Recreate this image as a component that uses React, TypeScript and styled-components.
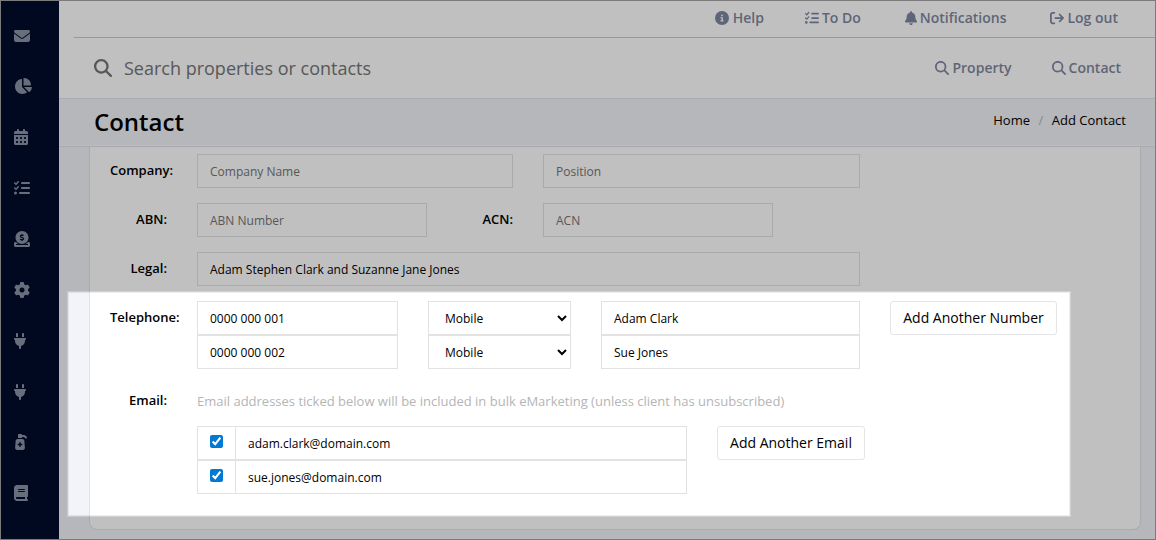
import React from "react";
import styled, { createGlobalStyle } from "styled-components";
import {
  FaArrowRightFromBracket,
  FaBell,
  FaBook,
  FaCalendarDays,
  FaChartPie,
  FaCircleDollarToSlot,
  FaCircleInfo,
  FaEnvelope,
  FaGear,
  FaListCheck,
  FaMagnifyingGlass,
  FaPlug,
  FaPumpMedical,
} from "react-icons/fa6";

const GlobalStyle = createGlobalStyle`
  *, *::before, *::after { box-sizing: border-box; }
  body { margin: 0; }
  body, input, select, button { font-family: "Open Sans", "Noto Sans", sans-serif; }
`;

const Frame = styled.div`
  position: relative;
  display: flex;
  width: 1156px;
  height: 540px;
  overflow: hidden;
  border: 1px solid #7b7b7b;
  background: #f2f4f9;
  color: #000;
  font-size: 13px;
`;

const Sidebar = styled.nav`
  flex: none;
  width: 58px;
  padding: 27px 0 0 13px;
  background: #000d2a;
  color: #8992a5;
`;

const SideLink = styled.a<{ $w: number; $dy?: number }>`
  display: flex;
  align-items: center;
  height: 16px;
  margin-bottom: 34.8px;

  svg {
    flex: none;
    width: ${(p) => p.$w}px;
    height: 16px;
    transform: translateY(${(p) => p.$dy ?? 0}px);
  }
`;

const Main = styled.main`
  flex: 1;
  min-width: 0;
  display: flex;
  flex-direction: column;
`;

const TopBar = styled.header`
  display: flex;
  justify-content: flex-end;
  align-items: center;
  height: 37px;
  margin-left: 15px;
  padding: 0 37px 3px 0;
  border-bottom: 1px solid #ccc;
  background: #fff;
  box-shadow: -15px 0 0 #fff;
`;

const NavLink = styled.a<{ $gap?: number; $space?: number }>`
  display: flex;
  align-items: center;
  gap: ${(p) => p.$space ?? 3}px;
  margin-left: ${(p) => p.$gap ?? 0}px;
  color: #7f87a0;
  font-size: 14px;
  font-weight: 600;
  line-height: 20px;
  white-space: nowrap;

  svg { width: auto; height: 14px; }
`;

const SearchBar = styled.div`
  display: flex;
  align-items: center;
  height: 61px;
  padding: 0 34px 0 35px;
  border-bottom: 1px solid #e2e4e8;
  background: #fff;
`;

const SearchIcon = styled(FaMagnifyingGlass)`
  width: 18px;
  height: 18px;
  color: #757575;
`;

const SearchInput = styled.input`
  flex: 1;
  min-width: 0;
  padding: 0;
  margin-left: 12px;
  border: 0;
  outline: 0;
  background: transparent;
  font-size: 18px;

  &::placeholder { color: #757575; }
`;

const TitleBar = styled.div`
  display: flex;
  justify-content: space-between;
  align-items: center;
  height: 48px;
  padding: 0 29px 2px 35px;
  border-bottom: 1px solid #dfe1e5;
  box-shadow: inset 0 -1px 0 #fafbfd;
`;

const Title = styled.h1`
  margin: 0;
  font-size: 24px;
  font-weight: 600;
  line-height: 32px;
`;

const Crumbs = styled.div`
  display: flex;
  gap: 8.5px;
  padding-bottom: 3px;
  line-height: 18px;
`;

const Slash = styled.span`
  color: #b0b3b9;
`;

const Card = styled.form`
  display: flex;
  flex-direction: column;
  gap: 15px;
  height: 383px;
  margin: 0 14px 0 30px;
  padding: 7px 20px 0;
  border: 1px solid #e1e3e7;
  border-top: 0;
  border-radius: 0 0 8px 8px;
  background: #fff;
`;

const Row = styled.div`
  display: flex;
  align-items: flex-start;
`;

const Label = styled.label<{ $left?: number }>`
  flex: none;
  width: ${(p) => (p.$left ? 86 : 57)}px;
  margin-right: 30px;
  font-weight: 600;
  line-height: 32px;
  text-align: right;
  white-space: nowrap;
`;

const Field = styled.input<{ $w: number }>`
  width: ${(p) => p.$w}px;
  height: 34px;
  padding: 0 12px;
  border: 1px solid #e2e2e2;
  border-radius: 0;
  outline: 0;
  background: #fff;
  color: #000;
  font-size: 12px;

  &::placeholder { color: #757575; opacity: 1; }
`;

const Select = styled.select`
  width: 143px;
  height: 34px;
  padding: 0 0 0 12px;
  border: 1px solid #e2e2e2;
  border-radius: 0;
  background: #fff;
  color: #000;
  font-size: 12px;
`;

const Stack = styled.div`
  display: flex;
  flex-direction: column;
`;

const Cells = styled.div<{ $gap?: number }>`
  display: flex;
  gap: ${(p) => p.$gap ?? 0}px;
`;

const Button = styled.button<{ $w: number }>`
  width: ${(p) => p.$w}px;
  height: 34px;
  margin-left: 30px;
  padding: 0 0 2px;
  border: 1px solid #e4e5e9;
  border-radius: 3px;
  background: #fff;
  color: #000;
  font-size: 14px;
  white-space: nowrap;
`;

const Hint = styled.p`
  margin: 0;
  height: 42px;
  color: #b5b5b5;
  line-height: 34px;
`;

const CheckCell = styled.span`
  display: flex;
  justify-content: center;
  width: 38px;
  height: 34px;
  padding-top: 8px;
  border: 1px solid #e2e2e2;
  border-right: 0;
`;

const Check = styled.input`
  width: 13px;
  height: 13px;
  margin: 0;
  accent-color: #0078d4;
`;

/* Highlights one part of the page; its spread shadow dims everything else. */
const Spotlight = styled.div`
  position: absolute;
  top: 290px;
  left: 66px;
  width: 1004px;
  height: 226px;
  border: 1px solid rgba(0, 0, 0, 0.18);
  border-radius: 1px;
  box-shadow:
    inset 0 0 0 1px rgba(0, 0, 0, 0.07),
    0 0 0 1200px rgba(0, 0, 0, 0.247);
  pointer-events: none;
`;

const sideIcons = [
  { Icon: FaEnvelope, w: 16 },
  { Icon: FaChartPie, w: 18, dy: -1 },
  { Icon: FaCalendarDays, w: 14, dy: -1 },
  { Icon: FaListCheck, w: 16 },
  { Icon: FaCircleDollarToSlot, w: 16 },
  { Icon: FaGear, w: 16 },
  { Icon: FaPlug, w: 12 },
  { Icon: FaPlug, w: 12 },
  { Icon: FaPumpMedical, w: 14 },
  { Icon: FaBook, w: 14 },
];

const phones = [
  { number: "0000 000 001", name: "Adam Clark" },
  { number: "0000 000 002", name: "Sue Jones" },
];

const emails = ["adam.clark@domain.com", "sue.jones@domain.com"];

export default function App() {
  return (
    <>
      <GlobalStyle />
      <Frame>
        <Sidebar>
          {sideIcons.map(({ Icon, w, dy }, i) => (
            <SideLink key={i} $w={w} $dy={dy}>
              <Icon />
            </SideLink>
          ))}
        </Sidebar>
        <Main>
          <TopBar>
            <NavLink $space={4}><FaCircleInfo />Help</NavLink>
            <NavLink $gap={41}><FaListCheck />To Do</NavLink>
            <NavLink $gap={43} $space={2}><FaBell />Notifications</NavLink>
            <NavLink $gap={44}><FaArrowRightFromBracket />Log out</NavLink>
          </TopBar>
          <SearchBar>
            <SearchIcon />
            <SearchInput placeholder="Search properties or contacts" />
            <NavLink><FaMagnifyingGlass />Property</NavLink>
            <NavLink $gap={40}><FaMagnifyingGlass />Contact</NavLink>
          </SearchBar>
          <TitleBar>
            <Title>Contact</Title>
            <Crumbs>
              <span>Home</span>
              <Slash>/</Slash>
              <span>Add Contact</span>
            </Crumbs>
          </TitleBar>
          <Card>
            <Row>
              <Label>Company:</Label>
              <Cells $gap={30}>
                <Field $w={316} placeholder="Company Name" />
                <Field $w={317} placeholder="Position" />
              </Cells>
            </Row>
            <Row>
              <Label>ABN:</Label>
              <Field $w={230} placeholder="ABN Number" />
              <Label $left={1}>ACN:</Label>
              <Field $w={230} placeholder="ACN" />
            </Row>
            <Row>
              <Label>Legal:</Label>
              <Field $w={663} defaultValue="Adam Stephen Clark and Suzanne Jane Jones" />
            </Row>
            <Row>
              <Label>Telephone:</Label>
              <Stack>
                {phones.map((p) => (
                  <Cells key={p.number} $gap={30}>
                    <Field $w={201} defaultValue={p.number} />
                    <Select defaultValue="Mobile">
                      <option>Mobile</option>
                    </Select>
                    <Field $w={259} defaultValue={p.name} />
                  </Cells>
                ))}
              </Stack>
              <Button type="button" $w={167}>Add Another Number</Button>
            </Row>
            <Row>
              <Label>Email:</Label>
              <Stack>
                <Hint>Email addresses ticked below will be included in bulk eMarketing (unless client has unsubscribed)</Hint>
                <Row>
                  <Stack>
                    {emails.map((e) => (
                      <Cells key={e}>
                        <CheckCell>
                          <Check type="checkbox" defaultChecked />
                        </CheckCell>
                        <Field $w={452} defaultValue={e} />
                      </Cells>
                    ))}
                  </Stack>
                  <Button type="button" $w={148}>Add Another Email</Button>
                </Row>
              </Stack>
            </Row>
          </Card>
        </Main>
        <Spotlight />
      </Frame>
    </>
  );
}
